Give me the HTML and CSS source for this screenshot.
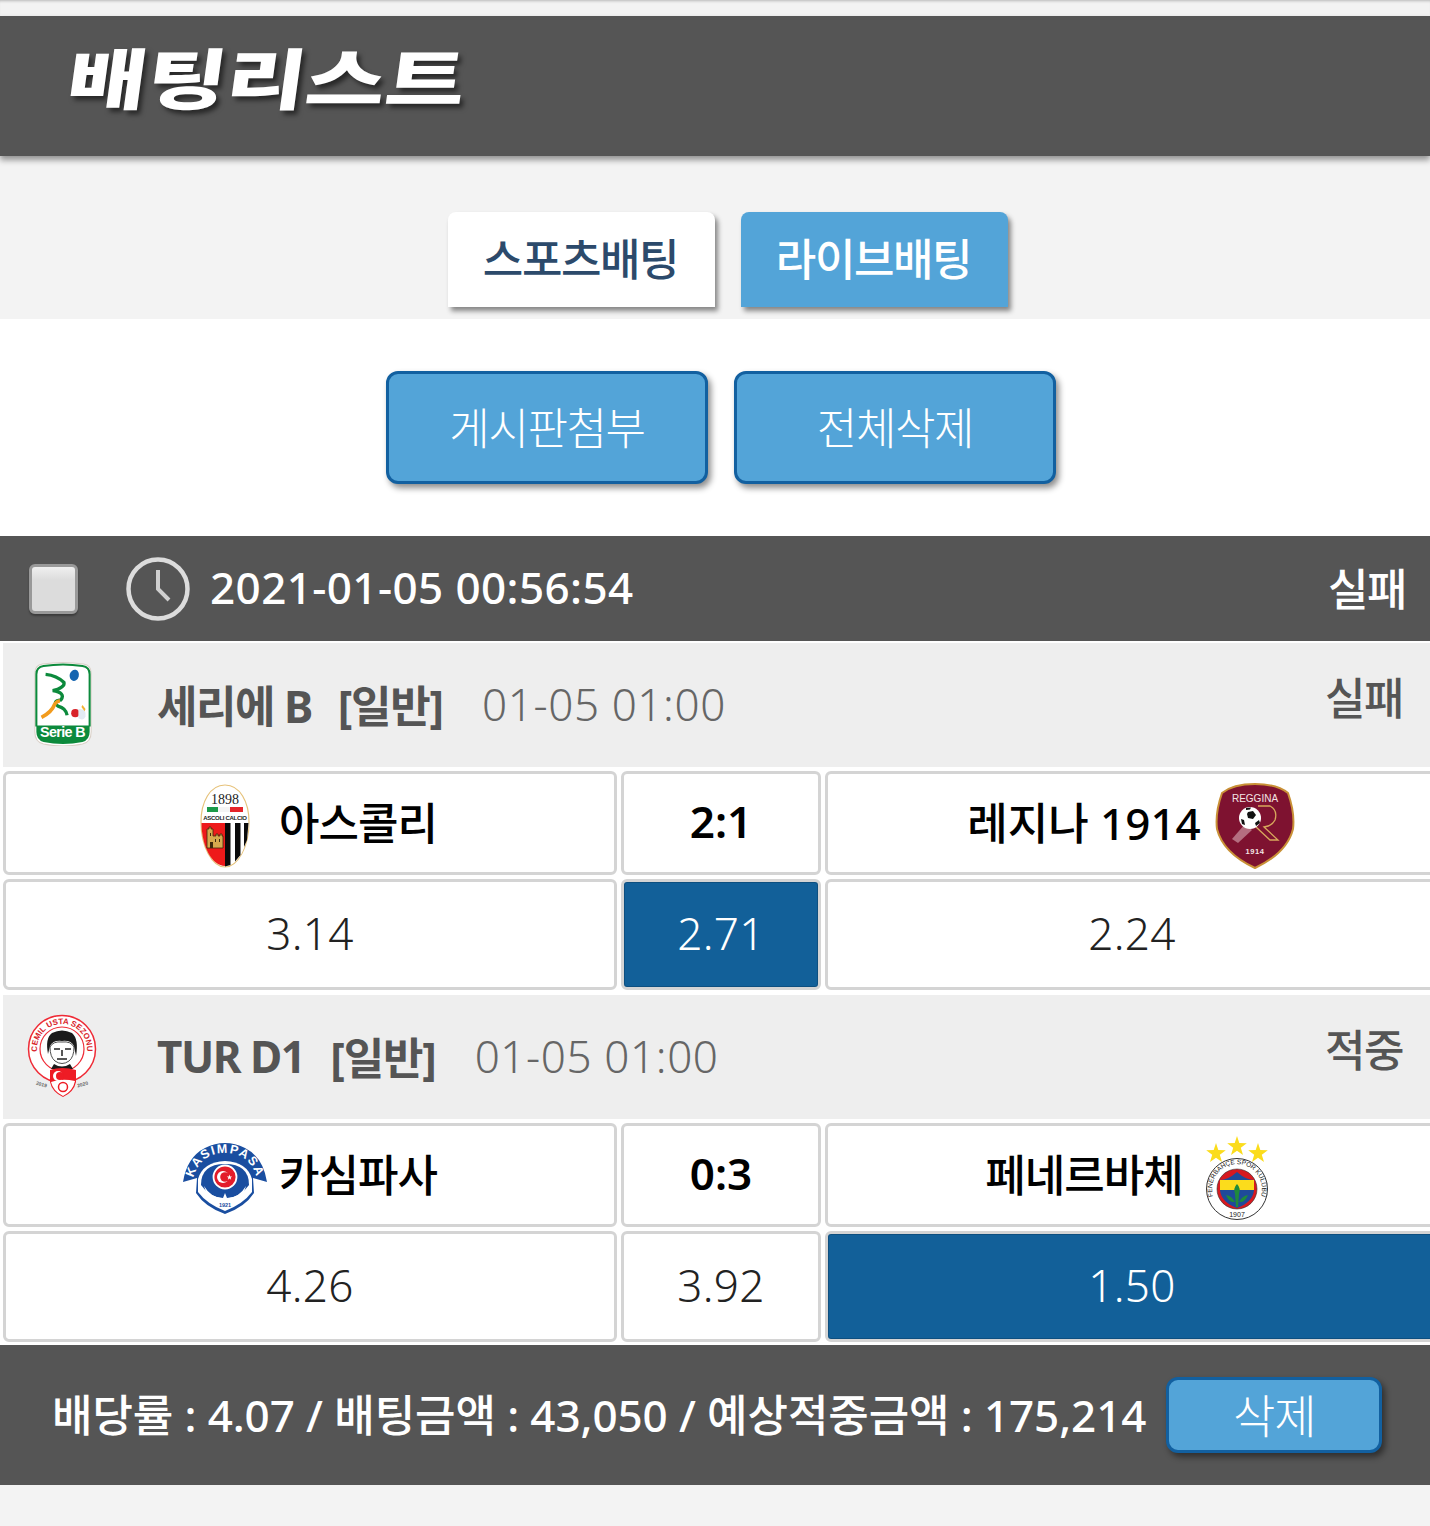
FILE: index.html
```html
<!DOCTYPE html>
<html lang="ko">
<head>
<meta charset="utf-8">
<title>배팅리스트</title>
<link rel="stylesheet" href="styles.css">
</head>
<body>
<div class="page">
  <div class="top-strip"></div>
  <header class="title-bar"><h1 class="title">배팅리스트</h1></header>
  <nav class="tabs">
    <a class="tab tab-on">스포츠배팅</a>
    <a class="tab tab-off">라이브배팅</a>
  </nav>
  <section class="actions">
    <button class="btn btn-lg">게시판첨부</button>
    <button class="btn btn-lg">전체삭제</button>
  </section>
  <section class="slip">
    <div class="slip-head">
      <span class="check"></span>
      <svg class="clock" viewBox="0 0 64 64"><circle cx="32" cy="32" r="29.5" fill="none" stroke="#dcdcdc" stroke-width="4.500"/><path d="M32 13v19l11 11" fill="none" stroke="#cfcfcf" stroke-width="4"/></svg>
      <span class="stamp">2021-01-05 00:56:54</span>
      <span class="result">실패</span>
    </div>

    <div class="league">
      <span class="league-logo">
        <svg width="62" height="84" viewBox="3 0 56 82">
          <path d="M3.500 11Q3.500 3 11 2Q31-1 51 2Q58.500 3 58.500 11V68Q58.500 78 50 80Q31 84 12 80Q3.500 78 3.500 68Z" fill="#fff" stroke="#d9cfc6" stroke-width="1"/>
          <path d="M5 62H57V68Q57 76 50 78Q31 82 12 78Q5 76 5 68Z" fill="#0c8a3c"/>
          <path d="M5 63V12Q5 5 12 4Q31 1 50 4Q57 5 57 12V63" fill="none" stroke="#0c8a3c" stroke-width="2"/>
          <ellipse cx="42" cy="13" rx="4.500" ry="5.500" fill="#1565b0" transform="rotate(15 42 13)"/>
          <path d="M14 12Q25 13 32 20Q33 25 21 28Q34 30 29 37Q20 38 26 43Q34 45 35 52" fill="none" stroke="#0c8a3c" stroke-width="3.200"/>
          <path d="M10 54Q20 49 23 41Q25 38 28 38" fill="none" stroke="#f29b1d" stroke-width="3.500"/>
          <circle cx="43" cy="50" r="4" fill="#d8232a"/>
          <path d="M46 46Q54 45 53 53Q51 58 46 55Z" fill="#e3ebf3"/>
          <path d="M50 42l3 4-1 2-3-4Z" fill="#f2b233"/>
          <text x="30.500" y="73" class="seriet">Serie B</text>
        </svg>
      </span>
      <span class="league-name">세리에 B</span>
      <span class="league-type">[일반]</span>
      <span class="league-time">01-05 01:00</span>
      <span class="league-status">실패</span>
    </div>
    <div class="cells">
      <div class="cell cell-team">
        <span class="team-logo">
          <svg width="50" height="84" viewBox="0 0 50 84">
            <path d="M25 1C40 1 49 18 49 38C49 62 38 83 25 83C12 83 1 62 1 38C1 18 10 1 25 1Z" fill="#fff" stroke="#e6c27a" stroke-width="1.200"/>
            <text x="25" y="20" class="asc-year">1898</text>
            <rect x="7" y="23" width="11" height="5" fill="#1c9a48"/><rect x="18" y="23" width="12" height="5" fill="#f4f4f4"/><rect x="30" y="23" width="13" height="5" fill="#e5252a"/>
            <text x="25" y="36" class="asc-name">ASCOLI CALCIO</text>
            <path d="M1.500 39H25V82C12 82 1.500 62 1.500 39Z" fill="#ee1a1a"/>
            <path d="M25 39H48.500C48.500 62 38 82 25 82Z" fill="#fff"/>
            <path d="M25 39H30.500V81L25 82.500ZM35 39H40.500V71L35 77.500ZM44 39H48.500L47 56L44 63Z" fill="#0b0b0b"/>
            <path d="M7 46V45H9V43H11V45H13V52H16V50H18V52H20V50H22V52H23V64H7Z" fill="#d6a94e" stroke="#3f2a0c" stroke-width=".8"/>
            <path d="M10 49h1v3h-1ZM15 55h1v3h-1ZM19 55h1v3h-1ZM10 58h3v6h-3Z" fill="#3f2a0c"/>
          </svg>
        </span>
        <span class="team-name">아스콜리</span>
      </div>
      <div class="cell cell-score">2:1</div>
      <div class="cell cell-team">
        <span class="team-name team-name-mixed">레지나 1914</span>
        <span class="team-logo">
          <svg width="82" height="86" viewBox="0 0 82 86">
            <path d="M41 1Q63 1 74 10Q81 30 79 46Q73 70 41 85Q9 70 3 46Q1 30 8 10Q19 1 41 1Z" fill="#7e1230" stroke="#c99137" stroke-width="2"/>
            <text x="41" y="19" class="reg-name">REGGINA</text>
            <path d="M44 23H56Q64 27 61 37Q58 43 50 44L64 57H56L42 44" fill="none" stroke="#d8a85c" stroke-width="1.300"/>
            <path d="M18 56L31 41L38 47L24 60Z" fill="#e9c9d0" opacity=".5"/>
            <circle cx="36" cy="35" r="11" fill="#fff"/>
            <path d="M34 29l5-1 3 4-3 4-5-1-1-4ZM27 36l3 1 1 5-3-1ZM41 40l4-3 1 3-4 3ZM32 25l5-.5-1 2-4 .5Z" fill="#111"/>
            <text x="41" y="71" class="reg-year">1914</text>
          </svg>
        </span>
      </div>
      <div class="cell cell-odd">3.14</div>
      <div class="cell cell-odd cell-picked">2.71</div>
      <div class="cell cell-odd">2.24</div>
    </div>

    <div class="league">
      <span class="league-logo">
        <svg width="72" height="84" viewBox="0 0 72 84">
          <circle cx="35" cy="35" r="33.500" fill="#fff" stroke="#ef2b36" stroke-width="1.500"/>
          <circle cx="35" cy="35" r="22" fill="#fff" stroke="#ef2b36" stroke-width="1.200"/>
          <path id="cem" d="M11 42A25 25 0 1 1 59 42" fill="none"/>
          <text class="cem-ring"><textPath href="#cem" startOffset="50%">CEMIL USTA SEZONU</textPath></text>
          <path d="M21 40Q18 24 25 19Q35 14 45 19Q52 25 49 42L47 32Q44 26 35 27Q26 26 23 32Z" fill="#1b1b1b"/>
          <path d="M23 33Q26 27 35 28Q44 27 47 33Q47 43 42 47Q35 52 28 47Q23 43 23 33Z" fill="#fff" stroke="#222" stroke-width=".8"/>
          <path d="M27 35h6M38 35h6M35 36v6M30 45h10" stroke="#222" stroke-width="1.500" fill="none"/>
          <path d="M27 50Q35 55 43 50L46 55H24Z" fill="#1b1b1b"/>
          <path d="M23 56Q35 52 49 56V68Q47 78 36 83Q25 78 23 68Z" fill="#ee1c25"/>
          <path d="M24 68Q35 64 48 67Q46 77 36 82Q26 77 24 68Z" fill="#fff"/>
          <circle cx="31" cy="62" r="5" fill="#fff"/><circle cx="33" cy="62" r="4" fill="#ee1c25"/>
          <circle cx="36" cy="73" r="4.500" fill="#fff" stroke="#ee1c25" stroke-width="1.500"/>
          <text x="14" y="72" class="cem-year" transform="rotate(15 14 72)">2019</text>
          <text x="56" y="72" class="cem-year" transform="rotate(-15 56 72)">2020</text>
        </svg>
      </span>
      <span class="league-name">TUR D1</span>
      <span class="league-type">[일반]</span>
      <span class="league-time">01-05 01:00</span>
      <span class="league-status">적중</span>
    </div>
    <div class="cells">
      <div class="cell cell-team">
        <span class="team-logo">
          <svg width="84" height="74" viewBox="0 0 84 74">
            <path d="M0 41Q4 16 22 7Q42-3 62 7Q80 16 84 41L70 37L71 52Q62 66 42 73Q22 66 13 52L14 37Z" fill="#1a4ea0"/>
            <path d="M15 38Q20 21 42 20Q64 21 69 38L69 51Q60 63 42 70Q24 63 15 51Z" fill="#fff"/>
            <path id="kas" d="M10 38Q17 12 42 12Q67 12 74 38" fill="none"/>
            <text class="kas-ring"><textPath href="#kas" startOffset="50%">KASIMPASA</textPath></text>
            <path d="M18 44Q18 23 42 23Q66 23 66 44Q58 56 42 58Q26 56 18 44Z" fill="#1a4ea0"/>
            <path d="M21 45Q28 57 40 57L42 52L44 57Q56 57 63 45Q60 58 50 59.500Q45 60 42 65Q39 60 34 59.500Q24 58 21 45Z" fill="#fff"/>
            <circle cx="42" cy="36" r="11.500" fill="#e31c2a" stroke="#fff" stroke-width="1.800"/>
            <circle cx="40" cy="36" r="6" fill="#fff"/><circle cx="42" cy="36" r="4.800" fill="#e31c2a"/>
            <path d="M46.500 33.500l.7 2 2 .1-1.600 1.200.6 2-1.700-1.200-1.700 1.200.6-2-1.600-1.200 2-.1Z" fill="#fff"/>
            <text x="42" y="66" class="kas-year">1921</text>
          </svg>
        </span>
        <span class="team-name">카심파사</span>
      </div>
      <div class="cell cell-score">0:3</div>
      <div class="cell cell-team">
        <span class="team-name">페네르바체</span>
        <span class="team-logo">
          <svg width="62" height="84" viewBox="0 0 62 84">
            <path d="M10 6l2.300 7 7.500.2-6 4.500 2.200 7.300-6-4.200-6 4.200 2.200-7.300-6-4.500 7.500-.2Z" fill="#fbdc1c" transform="translate(0 1)"/>
            <path d="M31 0l2.300 7 7.500.2-6 4.500 2.200 7.300-6-4.200-6 4.200 2.200-7.300-6-4.500 7.500-.2Z" fill="#fbdc1c"/>
            <path d="M52 6l2.300 7 7.500.2-6 4.500 2.200 7.300-6-4.200-6 4.200 2.200-7.300-6-4.500 7.500-.2Z" fill="#fbdc1c" transform="translate(0 1)"/>
            <circle cx="31" cy="53" r="30.500" fill="#fff" stroke="#333" stroke-width="1"/>
            <circle cx="31" cy="53" r="20" fill="#d71920" stroke="#333" stroke-width=".6"/>
            <path d="M14 44Q22 44 31 36Q40 44 48 44V54Q47 66 31 72Q15 66 14 54Z" fill="#1e4a9a"/>
            <path d="M14 44H48V54H14Z" fill="#fbdc1c"/>
            <path d="M31 48Q35 52 33 58L32 71H30L29 58Q27 52 31 48ZM20 59Q26 60 29 66Q23 67 20 59ZM42 59Q36 60 33 66Q39 67 42 59Z" fill="#1f8a3c"/>
            <path id="fen" d="M9.300 65.500A25 25 0 1 1 52.700 65.500" fill="none"/>
            <text class="fen-ring"><textPath href="#fen" startOffset="50%">FENERBAHÇE SPOR KULÜBÜ</textPath></text>
            <text x="31" y="80.500" class="fen-year">1907</text>
          </svg>
        </span>
      </div>
      <div class="cell cell-odd">4.26</div>
      <div class="cell cell-odd">3.92</div>
      <div class="cell cell-odd cell-picked">1.50</div>
    </div>

    <footer class="slip-foot">
      <span class="summary">배당률 : 4.07 / 배팅금액 : 43,050 / 예상적중금액 : 175,214</span>
      <button class="btn btn-sm">삭제</button>
    </footer>
  </section>
</div>
</body>
</html>
```
FILE: styles.css
```css
* { box-sizing: border-box; }
html, body { margin: 0; padding: 0; }
body {
  width: 1430px;
  height: 1526px;
  overflow: hidden;
  background: #f3f3f3;
  font-family: "Noto Sans", "Noto Sans CJK KR", sans-serif;
}
.page { width: 1430px; overflow: hidden; }
.top-strip { height: 16px; background: #f3f3f3; box-shadow: inset 0 3px 3px -2px rgba(0,0,0,.25); }

.title-bar {
  height: 140px;
  background: #555;
  box-shadow: 0 4px 6px rgba(0,0,0,.4);
  padding: 26px 0 0 73px;
  position: relative;
}
.title {
  margin: 0;
  width: 300px;
  height: 66px;
  color: #fff;
  font-family: "Noto Sans CJK KR", sans-serif;
  font-weight: 900;
  font-size: 66px;
  line-height: 66px;
  white-space: nowrap;
  transform-origin: left top;
  transform: scaleX(1.31) skewX(-6deg);
  text-shadow: 3px 4px 5px rgba(0,0,0,.55);
}

.tabs {
  height: 163px;
  padding: 56px 0 0 26px;
  display: flex;
  justify-content: center;
  gap: 26px;
  background: #f3f3f3;
}
.tab {
  width: 267px;
  height: 95px;
  border-radius: 8px 8px 0 0;
  display: flex;
  align-items: center;
  justify-content: center;
  padding: 0 2px 5px 0;
  font-family: "Noto Sans CJK KR", sans-serif;
  font-size: 44px;
  font-weight: 500;
  letter-spacing: -1.400px;
  box-shadow: 3px 4px 5px rgba(0,0,0,.45);
}
.tab-on { background: #fff; color: #2c4a6b; }
.tab-off { background: #53a4d8; color: #fff; }

.actions {
  height: 217px;
  padding: 52px 0 0 12px;
  background: #fff;
  display: flex;
  justify-content: center;
  gap: 26px;
}
.btn {
  border: 3px solid #1260a0;
  background: #53a4d8;
  color: #fff;
  font-family: "Noto Sans CJK KR", sans-serif;
  font-weight: 300;
  padding: 0 0 4px;
  box-shadow: 3px 4px 6px rgba(0,0,0,.45);
}
.btn-lg {
  width: 322px;
  height: 113px;
  border-radius: 12px;
  font-size: 44px;
  letter-spacing: -1.400px;
}
.btn-sm {
  width: 216px;
  height: 76px;
  border-radius: 12px;
  font-size: 46px;
  letter-spacing: -1px;
  margin-left: 20px;
}

.slip { background: #fff; }
.slip-head {
  height: 105px;
  background: #555;
  color: #fff;
  display: flex;
  align-items: center;
  padding: 0 24px 0 29px;
}
.check {
  width: 49px;
  height: 50px;
  border: 3px solid #999;
  border-radius: 6px;
  background: linear-gradient(#f0f0f0, #dcdcdc 30%);
  box-shadow: 0 2px 2px rgba(0,0,0,.3);
}
.clock { width: 64px; height: 64px; margin-left: 48px; }
.stamp {
  margin-left: 20px;
  padding-bottom: 3px;
  font-size: 44px;
  font-weight: 500;
  letter-spacing: .4px;
}
.result {
  margin-left: auto;
  padding-bottom: 4px;
  font-family: "Noto Sans CJK KR", sans-serif;
  font-size: 44px;
  font-weight: 500;
  letter-spacing: -1.500px;
}

.league {
  height: 124px;
  margin: 2px 0 4px 3px;
  background: #eee;
  display: flex;
  align-items: center;
  padding: 0 27px 2px 0;
  color: #555;
}
.cells + .league { margin-top: 5px; }
.league-logo {
  width: 120px;
  margin-right: 34px;
  flex: none;
  display: flex;
  justify-content: center;
}
.league-name, .league-type {
  font-size: 44px;
  font-weight: 700;
  letter-spacing: -1.500px;
}
.league-type { margin-left: 26px; letter-spacing: -1.200px; }
.league-time {
  margin-left: 39px;
  font-size: 44px;
  font-weight: 300;
  letter-spacing: .6px;
  color: #666;
}
.league-status {
  margin-left: auto;
  margin-bottom: 16px;
  font-family: "Noto Sans CJK KR", sans-serif;
  font-size: 44px;
  font-weight: 500;
  letter-spacing: -1.500px;
}

.cells {
  width: 1440px;
  margin: 0 0 3px 3px;
  display: grid;
  grid-template-columns: 614px 200px 614px;
  grid-template-rows: 104px 111px;
  gap: 4px;
}
.cell {
  border: 3px solid #d4d4d4;
  border-radius: 6px;
  background: #fff;
  display: flex;
  align-items: center;
  justify-content: center;
  padding-bottom: 4px;
  font-size: 44px;
  color: #000;
}
.cell-team { gap: 12px; padding-bottom: 0; }
.team-logo {
  width: 84px;
  flex: none;
  display: flex;
  justify-content: center;
  padding-top: 6px;
}
.team-name {
  padding-bottom: 4px;
  font-weight: 500;
  letter-spacing: -1px;
}
.team-name-mixed { letter-spacing: 0; }
.cell-score { font-weight: 600; }
.cell-odd { font-weight: 300; color: #222; letter-spacing: .4px; }
.cell-picked { background: #126099; color: #fff; border-color: #d4d4d4; box-shadow: inset 0 0 0 1px #0d4f80; }

.slip-foot {
  height: 140px;
  background: #555;
  color: #fff;
  display: flex;
  align-items: center;
  padding-left: 52px;
}
.summary {
  padding-bottom: 5px;
  font-size: 44px;
  font-weight: 500;
  white-space: nowrap;
  letter-spacing: -.1px;
}

.seriet { font: 700 14px "Liberation Sans", sans-serif; fill: #fff; text-anchor: middle; letter-spacing: -.6px; }
.asc-year { font: 400 14px "Liberation Serif", serif; fill: #222; text-anchor: middle; }
.asc-name { font: 700 6px "Liberation Sans", sans-serif; fill: #222; text-anchor: middle; letter-spacing: -.3px; }
.reg-name { font: 400 10px "Liberation Sans", sans-serif; fill: #f3e4e4; text-anchor: middle; }
.reg-year { font: 700 7.500px "Liberation Sans", sans-serif; fill: #f3e4e4; text-anchor: middle; letter-spacing: .6px; }
.cem-ring { font: 700 8px "Liberation Sans", sans-serif; fill: #d8232a; text-anchor: middle; }
.cem-year { font: 700 5px "Liberation Sans", sans-serif; fill: #666; text-anchor: middle; }
.kas-ring { font: 700 12.500px "Liberation Sans", sans-serif; fill: #fff; text-anchor: middle; letter-spacing: 1.500px; }
.kas-year { font: 700 5.500px "Liberation Sans", sans-serif; fill: #1a4ea0; text-anchor: middle; }
.fen-ring { font: 400 6.500px "Liberation Sans", sans-serif; fill: #222; text-anchor: middle; }
.fen-year { font: 400 7px "Liberation Sans", sans-serif; fill: #222; text-anchor: middle; }
```
